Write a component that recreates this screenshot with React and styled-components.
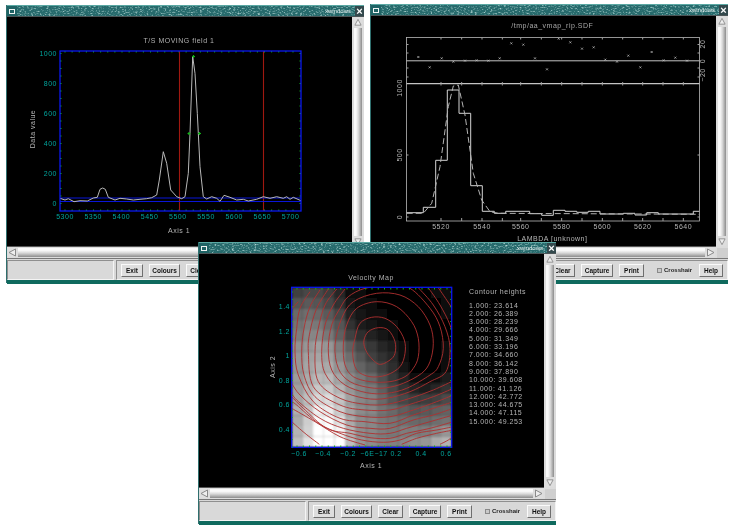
import React from "react";
import styled, { createGlobalStyle } from "styled-components";

const Global = createGlobalStyle`
  html, body { margin: 0; padding: 0; background: #fff; }
  body { width: 732px; height: 527px; overflow: hidden; font-family: "Liberation Sans", Arial, sans-serif; }
`;

const Desktop = styled.div`
  position: relative;
  width: 732px;
  height: 527px;
  background: #fff;
  overflow: hidden;
  filter: blur(0.3px);
`;

const Win = styled.section`
  position: absolute;
  left: ${p => p.$x}px;
  top: ${p => p.$y}px;
  width: ${p => p.$w}px;
  height: ${p => p.$h}px;
  z-index: ${p => p.$z};
  display: flex;
  flex-direction: column;
  background: #d6d6d6;
  box-sizing: border-box;
  border-left: 1px solid #2f6f6e;
`;

const TitleBar = styled.header`
  height: 10px;
  flex: none;
  display: flex;
  align-items: center;
  justify-content: flex-end;
  background-color: #266a6c;
  border-top: 1px solid #5aa8a3;
  border-bottom: 1px solid #4b5557;
  position: relative;
  overflow: hidden;
`;

const Noise = styled.svg`
  position: absolute;
  left: 0;
  top: 0;
  width: 100%;
  height: 100%;
`;

const MenuBox = styled.span`
  position: absolute;
  left: 0;
  top: 0;
  width: 10px;
  height: 10px;
  background: #1f6365;
  display: flex;
  align-items: center;
  justify-content: center;
  &::after {
    content: "";
    width: 4px;
    height: 3px;
    border: 1px solid #f0f4f4;
  }
`;

const TitleText = styled.span`
  position: relative;
  font-size: 6px;
  color: #dfeaea;
  margin-right: 13px;
`;

const CloseBox = styled.span`
  position: absolute;
  right: 0;
  top: 0;
  width: 9px;
  height: 10px;
  background: #33494d;
  color: #fff;
  font: bold 11px/10px "Liberation Sans", sans-serif;
  text-align: center;
`;

const Body = styled.div`
  flex: none;
  display: flex;
  height: ${p => p.$h + 1}px;
`;

const Canvas = styled.svg`
  display: block;
  flex: none;
  width: ${p => p.$w}px;
  height: ${p => p.$h}px;
  background: #000;
  border-bottom: 1px solid #555;
`;

const VScroll = styled.div`
  flex: 1;
  display: flex;
  flex-direction: column;
  padding: 1px 2px 1px 2px;
  gap: 1px;
  background: #dcdcdc;
`;

const Trough = styled.div`
  flex: 1;
  background: linear-gradient(${p => p.$v ? "90deg" : "180deg"}, #fafafa 0 25%, #d8d8d8 55%, #8c8c8c 100%);
`;

const ArrowBox = styled.svg`
  flex: none;
  display: block;
  width: ${p => p.$v ? "100%" : "9px"};
  height: ${p => p.$v ? "9px" : "100%"};
  background: #dedede;
`;

const HRow = styled.div`
  flex: none;
  height: 11px;
  display: flex;
  background: #dcdcdc;
`;

const HScroll = styled.div`
  flex: 1;
  display: flex;
  gap: 1px;
  padding: 1px;
`;

const Corner = styled.div`
  flex: none;
  width: 11px;
  background: #cfcfcf;
  margin: 1px 0 0 1px;
`;

const Panel = styled.footer`
  flex: none;
  height: 20px;
  display: flex;
  gap: 2px;
  background: #d8d8d8;
  border-top: 1px solid #777;
  padding-top: 1px;
`;

const Status = styled.div`
  flex: none;
  width: 107px;
  box-sizing: border-box;
  border: 1px solid;
  border-color: #8f8f8f #f4f4f4 #f4f4f4 #8f8f8f;
  background: #d9d9d9;
`;

const Buttons = styled.div`
  flex: 1;
  min-width: 0;
  display: flex;
  align-items: center;
  gap: 6px;
  padding-left: 4px;
  border: 1px solid;
  border-color: #8f8f8f #f4f4f4 #f4f4f4 #8f8f8f;
`;

const Btn = styled.button`
  flex: none;
  width: ${p => p.$w}px;
  height: 13px;
  padding: 0;
  background: #dedede;
  border: 1px solid;
  border-color: #fafafa #6f6f6f #6f6f6f #fafafa;
  color: #111;
  font: bold 6.5px "Liberation Sans", sans-serif;
  margin-left: ${p => p.$ml || 0}px;
`;

const Cross = styled.label`
  flex: none;
  width: 33px;
  display: flex;
  align-items: center;
  gap: 2px;
  margin-left: 7px;
  color: #222;
  font: bold 6px "Liberation Sans", sans-serif;
  white-space: nowrap;
  &::before {
    content: "";
    flex: none;
    width: 3px;
    height: 3px;
    background: #c9c9c9;
    border: 1px solid #8a8a8a;
  }
`;

const Footer = styled.div`
  flex: none;
  height: 4px;
  background: #0f6a5e;
`;

const Label = styled.text`
  font: 7px "Liberation Sans", sans-serif;
  letter-spacing: 0.5px;
  fill: ${p => p.$c || "#b4b4b4"};
  text-anchor: ${p => p.$a || "middle"};
`;

const Line = styled.path`
  fill: none;
  stroke: ${p => p.$c};
  stroke-width: ${p => p.$s || 1}px;
  stroke-linejoin: round;
`;

const poly = (pts, ox, oy) =>
  "M" + pts.map(([x, y]) => `${(ox + x / 3).toFixed(1)} ${(oy + y / 3).toFixed(1)}`).join("L");

const TEAL = "#00a49c";
const BLUE = "#0a18f0";
const GREEN = "#12b018";

const Arrow = ({ v, end }) => (
  <ArrowBox $v={v} viewBox="0 0 9 9" preserveAspectRatio="xMidYMid meet">
    <path
      d={v ? (end ? "M1 1.500H8L4.500 8Z" : "M1 7.500H8L4.500 1Z") : (end ? "M1.500 1V8L8 4.500Z" : "M7.500 1V8L1 4.500Z")}
      fill="#eee"
      stroke="#8a8a8a"
      strokeWidth="1"
    />
  </ArrowBox>
);

const Controls = () => (
  <Panel>
    <Status />
    <Buttons>
      <Btn $w={22}>Exit</Btn>
      <Btn $w={31}>Colours</Btn>
      <Btn $w={25}>Clear</Btn>
      <Btn $w={32}>Capture</Btn>
      <Btn $w={25}>Print</Btn>
      <Cross>Crosshair</Cross>
      <Btn $w={24} $ml={3}>Help</Btn>
    </Buttons>
  </Panel>
);

const Window = ({ id, x, y, h, z, canvasH, children }) => (
  <Win $x={x} $y={y} $w={358} $h={h} $z={z}>
    <TitleBar>
      <Noise aria-hidden="true">
        <filter id={`grain${id}`} x="0" y="0" width="100%" height="100%">
          <feTurbulence type="fractalNoise" baseFrequency="0.45 0.8" numOctaves="2" seed={id * 3 + 1} />
          <feColorMatrix values="0 0 0 0 0.45  0 0 0 0 0.68  0 0 0 0 0.66  2.6 0 0 0 -1.3" />
        </filter>
        <rect width="100%" height="100%" filter={`url(#grain${id})`} />
      </Noise>
      <MenuBox />
      <TitleText>xwindows</TitleText>
      <CloseBox>×</CloseBox>
    </TitleBar>
    <Body $h={canvasH}>
      <Canvas $w={345} $h={canvasH} viewBox={`${x + 1} ${y + 12} 345 ${canvasH}`}>
        {children}
      </Canvas>
      <VScroll>
        <Arrow v />
        <Trough $v />
        <Arrow v end />
      </VScroll>
    </Body>
    <HRow>
      <HScroll>
        <Arrow />
        <Trough />
        <Arrow end />
      </HScroll>
      <Corner />
    </HRow>
    <Controls />
    <Footer />
  </Win>
);

const range = (a, b, n) => Array.from({ length: n }, (_, i) => a + ((b - a) * i) / (n - 1));

const spectrum = [[180,595],[195,600],[205,596],[222,605],[240,602],[262,603],[280,594],[292,592],[300,568],[308,564],[316,568],[325,592],[345,600],[360,595],[380,597],[400,600],[420,598],[440,596],[455,593],[470,585],[478,540],[490,455],[500,490],[512,570],[530,590],[545,596],[555,590],[565,520],[570,400],[578,170],[585,220],[592,340],[600,500],[610,590],[620,597],[635,590],[650,595],[660,604],[672,586],[690,592],[710,600],[730,598],[745,603],[770,598],[790,590],[810,595],[830,590],[850,595],[860,590],[870,598],[880,592],[903,602]];

const Plot1 = () => (
  <>
    <Label x={179} y={43} $c="#b0b0b0">T/S MOVING field 1</Label>
    <Label x={179} y={233}>Axis 1</Label>
    <Label transform="translate(35 129) rotate(-90)">Data value</Label>
    {[[1000,53.5],[800,83.5],[600,113.5],[400,143.5],[200,173.5],[0,203.5]].map(([t, y]) => (
      <Label key={t} x={57} y={y + 2.5} $a="end" $c={TEAL}>{t}</Label>
    ))}
    {[5300,5350,5400,5450,5500,5550,5600,5650,5700].map((t, i) => (
      <Label key={t} x={65 + i * 28.2} y={219} $c={TEAL}>{t}</Label>
    ))}
    <Line $c={GREEN} d={range(65, 293, 33).map(x => `M${x} 51v1.500M${x} 211v-1.500`).join("")} />
    <Line $c={GREEN} d={range(53.5, 203.5, 21).map(y => `M60 ${y}h1.500M301 ${y}h-1.500`).join("")} />
    <Line $c="#a01810" $s={1.1} d="M179.500 51V211M263.500 51V211" />
    <Line $c={BLUE} $s={0.9} d="M60 198H301M60 201.500H301" />
    <Line $c="#b8b8b8" d={poly(spectrum, 0, 0)} />
    <Line $c={GREEN} $s={1.2} d="M193.500 55v3M192 56.500h3M189 132v3M187.500 133.500h3M199.500 132v3M198 133.500h3" />
    <rect x={60} y={51} width={241} height={160} fill="none" stroke={BLUE} strokeWidth={1.3} />
  </>
);

const hist = [[125,638],[175,638],[175,622],[212,622],[212,481],[247,481],[247,270],[282,270],[282,340],[317,340],[317,557],[352,557],[352,634],[388,634],[388,640],[422,640],[422,634],[494,634],[494,641],[530,641],[530,646],[565,646],[565,631],[600,631],[600,634],[635,634],[635,637],[670,637],[670,634],[705,634],[705,642],[775,642],[775,640],[810,640],[810,645],[845,645],[845,638],[880,638],[880,642],[985,642],[985,634],[1003,634]];
const gauss = [[125,640],[175,640],[200,610],[225,500],[250,320],[265,258],[280,255],[300,345],[325,520],[350,600],[375,635],[400,640],[1003,643]];
const marks = [[160,171],[194,202],[230,175],[265,185],[300,182],[335,181],[370,182],[404,175],[439,130],[475,134],[510,175],[546,208],[581,116],[616,127],[651,146],[686,142],[721,179],[756,185],[790,167],[826,202],[860,156],[896,181],[931,173],[966,182]];

const Plot2 = () => {
  const ox = 365;
  const map = x => ox + x / 3;
  return (
    <>
      <Label x={map(562)} y={28} $c="#a8a8a8">/tmp/aa_vmap_rip.SDF</Label>
      <Label x={map(562)} y={241}>LAMBDA [unknown]</Label>
      <rect x={406.5} y={37.5} width={293} height={183.5} fill="none" stroke="#b8b8b8" strokeWidth={0.8} />
      <Line $c="#c4c4c4" d="M406.500 60.800H699.500" />
      <Line $c="#c4c4c4" $s={1.3} d="M406.500 83.700H699.500" />
      <Line $c="#a0a0a0" d={[228,290,351,412,467,529,590,651,712,773,833,894,955].map(x => `M${map(x)} 37.500v2M${map(x)} 82v3.500M${map(x)} 221v-3`).join("")} />
      <Line $c="#a0a0a0" d="M406.500 44.500h2M406.500 53h2M406.500 68h2M406.500 77h2M406.500 155h2M406.500 217h2M699.500 44.500h-2M699.500 53h-2M699.500 68h-2M699.500 77h-2M699.500 155h-2M699.500 217h-2" />
      {[[5520,228],[5540,351],[5560,467],[5580,590],[5600,712],[5620,833],[5640,955]].map(([t, x]) => (
        <Label key={t} x={map(x)} y={229}>{t}</Label>
      ))}
      {[[1000,88],[500,155],[0,217]].map(([t, y]) => (
        <Label key={t} transform={`translate(402 ${y}) rotate(-90)`}>{t}</Label>
      ))}
      {[["20",44],["0",61],["−20",75]].map(([t, y]) => (
        <Label key={t} transform={`translate(705 ${y}) rotate(-90)`}>{t}</Label>
      ))}
      <Line $c="#d4d4d4" d={poly(hist, ox, 0)} />
      <Line $c="#b4b4b4" strokeDasharray="6 3" d={poly(gauss, ox, 0)} />
      <Line $c="#c0c0c0" $s={0.7} d={marks.map(([x, y]) => `M${map(x) - 1} ${y / 3 - 1}l2 2M${map(x) + 1} ${y / 3 - 1}l-2 2`).join("")} />
    </>
  );
};

const field = [
  [65,70,70,60,40,15,8,5,3,2,2,2,3,8,15],
  [85,90,85,70,50,20,12,8,5,3,2,2,3,6,12],
  [105,110,105,90,70,35,22,15,8,4,2,0,0,3,10],
  [115,125,120,105,85,50,30,22,15,8,3,0,0,0,6],
  [125,135,135,120,95,65,45,35,25,15,5,0,0,0,5],
  [145,150,160,150,125,95,70,55,40,30,10,0,0,0,8],
  [150,160,165,160,135,110,85,65,50,40,15,0,0,0,10],
  [150,165,175,170,150,125,100,85,65,45,25,5,0,5,15],
  [155,170,185,185,165,140,120,105,80,55,35,15,10,15,30],
  [160,180,200,200,180,150,130,120,95,70,50,35,30,40,50],
  [165,190,215,220,195,160,135,130,105,85,70,60,60,65,75],
  [175,195,240,235,205,165,140,135,115,105,95,85,90,95,100],
  [170,205,250,250,225,170,140,135,120,115,110,105,105,110,115],
  [180,210,255,255,245,180,140,135,125,120,125,125,125,135,150],
  [190,225,255,255,255,190,150,140,130,130,135,145,150,170,180],
];

/* contour lines traced from the map, in tripled pixels from (290,285) */
const closedContours = [
  [[222,165],[235,140],[265,128],[295,135],[315,170],[315,205],[300,225],[268,238],[240,215],[225,190]],
  [[195,160],[210,115],[245,97],[285,100],[320,125],[343,165],[345,205],[330,245],[290,270],[240,275],[200,255],[188,205]],
  [[170,120],[200,70],[260,50],[320,65],[365,110],[385,160],[385,215],[370,250],[345,275],[300,290],[240,290],[190,275],[165,240],[160,180]],
  [[155,100],[190,50],[260,25],[330,30],[385,65],[420,120],[430,175],[420,230],[395,265],[340,295],[290,308],[240,308],[180,290],[145,250],[135,180]],
  [[150,70],[175,35],[225,10],[300,2],[360,10],[420,70],[450,125],[460,190],[445,245],[420,270],[350,310],[290,325],[230,323],[165,300],[125,255],[115,190],[125,120]],
];
const openContours = [
  [[385,8],[430,60],[465,125],[480,190],[468,260],[420,290],[360,320],[290,340],[225,340],[150,315],[105,265],[95,200],[105,120],[130,60],[165,12]],
  [[415,8],[450,60],[480,120],[495,180]],
  [[495,285],[430,315],[360,340],[290,358],[225,358],[150,340],[85,290],[75,200],[85,130],[105,60],[140,12]],
  [[445,8],[480,60],[495,85]],
  [[490,310],[430,335],[360,358],[300,375],[225,375],[150,360],[70,305],[55,200],[60,140],[80,70],[115,12]],
  [[490,330],[440,350],[370,375],[300,395],[225,395],[150,380],[75,335],[42,270],[35,200],[42,130],[60,65],[90,15]],
  [[490,350],[430,370],[370,390],[300,415],[225,410],[150,400],[70,350],[25,270],[15,200],[20,130],[30,70],[60,20]],
  [[490,370],[430,390],[370,405],[300,430],[240,430],[170,420],[90,380],[30,330],[5,295]],
  [[490,390],[420,410],[350,430],[300,445],[240,445],[160,430],[90,400],[20,345],[5,320]],
  [[490,410],[420,430],[350,445],[300,460],[240,458],[180,445],[110,430],[40,370],[5,335]],
  [[490,425],[440,435],[380,445],[330,465],[280,472],[215,465],[150,445],[85,415],[20,360],[5,350]],
  [[225,480],[150,455],[75,410],[5,370]],
  [[88,478],[45,445],[5,410]],
  [[335,478],[380,460],[440,445],[490,435]],
  [[450,478],[475,465],[490,452]],
  [[25,50],[5,72]],
];

/* Catmull-Rom curve through the traced points */
const smooth = (pts, closed) => {
  const P = pts.map(([x, y]) => [290 + x / 3, 285 + y / 3]);
  const n = P.length;
  const at = i => (closed ? P[(i + n) % n] : P[Math.max(0, Math.min(n - 1, i))]);
  let d = `M${P[0][0].toFixed(1)} ${P[0][1].toFixed(1)}`;
  for (let i = 0; i < (closed ? n : n - 1); i++) {
    const [a, b, c, e] = [at(i - 1), at(i), at(i + 1), at(i + 2)];
    const c1 = [b[0] + (c[0] - a[0]) / 6, b[1] + (c[1] - a[1]) / 6];
    const c2 = [c[0] - (e[0] - b[0]) / 6, c[1] - (e[1] - b[1]) / 6];
    d += `C${c1[0].toFixed(1)} ${c1[1].toFixed(1)} ${c2[0].toFixed(1)} ${c2[1].toFixed(1)} ${c[0].toFixed(1)} ${c[1].toFixed(1)}`;
  }
  return d;
};

const heights = ["23.614","26.389","28.239","29.666","31.349","33.196","34.660","36.142","37.890","39.608","41.126","42.772","44.675","47.115","49.253"];

const Plot3 = () => (
  <>
    <clipPath id="field"><rect x={291.7} y={287.3} width={160} height={160} /></clipPath>
    <filter id="soften"><feGaussianBlur stdDeviation="0.9" /></filter>
    <Label x={371} y={280} $c="#b0b0b0">Velocity Map</Label>
    <Label x={371} y={468}>Axis 1</Label>
    <Label transform="translate(275 367) rotate(-90)">Axis 2</Label>
    <g clipPath="url(#field)">
      <g filter="url(#soften)">
        {field.map((row, j) =>
          row.map((g, i) => (
            <rect key={`${i}-${j}`} x={291.7 + i * 10.667} y={287.3 + j * 10.667} width={10.8} height={10.8} fill={`rgb(${g},${g},${g})`} />
          ))
        )}
      </g>
      {closedContours.map((c, k) => <Line key={k} $c="#b03030" $s={0.9} d={smooth(c, true)} />)}
      {openContours.map((c, k) => <Line key={k} $c="#b03030" $s={0.9} d={smooth(c, false)} />)}
    </g>
    <rect x={291.7} y={287.3} width={160} height={160} fill="none" stroke={BLUE} strokeWidth={1.3} />
    <Line $c={GREEN} d={range(297, 447, 25).map(x => `M${x} 288v1.500M${x} 447v-1.500`).join("")} />
    <Line $c={GREEN} d={range(292, 447, 22).map(y => `M292 ${y}h1M451 ${y}h-1`).join("")} />
    {[["1.4",306.7],["1.2",331.7],["1",356],["0.8",380.7],["0.6",405.3],["0.4",429.7]].map(([t, y]) => (
      <Label key={t} x={290} y={y + 2} $a="end" $c={TEAL}>{t}</Label>
    ))}
    {[["−0.6",299],["−0.4",323],["−0.2",348],["−6E−17",374],["0.2",396],["0.4",421],["0.6",446]].map(([t, x]) => (
      <Label key={t} x={x} y={455.5} $c={TEAL}>{t}</Label>
    ))}
    <Label x={469} y={294} $a="start">Contour heights</Label>
    {heights.map((h, i) => (
      <Label key={h} x={469} y={307.5 + i * 8.3} $a="start">{`${i + 1}.000:  ${h}`}</Label>
    ))}
  </>
);

export default function App() {
  return (
    <Desktop>
      <Global />
      <Window id={1} x={6} y={5} h={278} z={1} canvasH={229}><Plot1 /></Window>
      <Window id={2} x={370} y={4} h={279} z={1} canvasH={230}><Plot2 /></Window>
      <Window id={3} x={198} y={242} h={282} z={2} canvasH={233}><Plot3 /></Window>
    </Desktop>
  );
}
